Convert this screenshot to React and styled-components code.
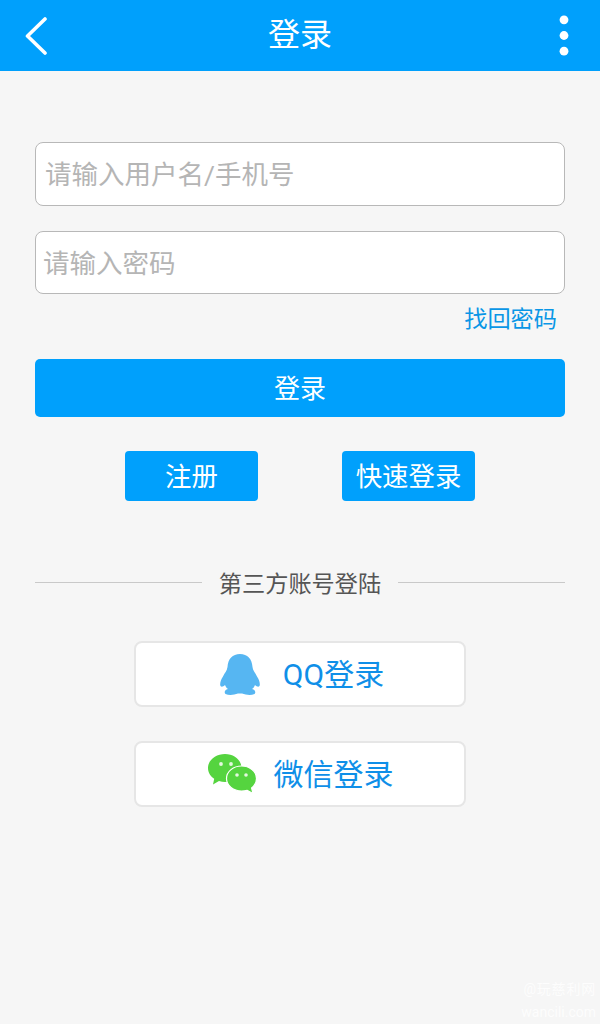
import styled, { createGlobalStyle } from 'styled-components'

const GlobalStyle = createGlobalStyle`
  html, body {
    margin: 0;
    padding: 0;
    background: #f6f6f6;
    font-family: Roboto, "Noto Sans CJK SC", "Liberation Sans", sans-serif;
  }
  * { box-sizing: border-box; }
`

const Page = styled.div`
  position: relative;
  width: 600px;
  height: 1024px;
  overflow: hidden;
  background: #f6f6f6;
`

const Header = styled.header`
  height: 71px;
  padding: 0 31px 0 24px;
  display: flex;
  align-items: center;
  justify-content: space-between;
  background: #00a0fc;
  color: #fff;
`

const HeaderTitle = styled.h1`
  margin: 0;
  font-size: 32px;
  font-weight: 400;
  line-height: 71px;
`

const IconButton = styled.div`
  width: ${props => (props.$end ? 21 : 28)}px;
  height: 44px;
  display: flex;
  align-items: center;
  justify-content: ${props => (props.$end ? 'flex-end' : 'flex-start')};
`

const Form = styled.main`
  padding: 71px 35px 0;
  display: flex;
  flex-direction: column;
`

const Field = styled.div`
  height: ${props => props.$height}px;
  margin-bottom: ${props => props.$gap}px;
  padding: 0 0 3px ${props => props.$indent}px;
  display: flex;
  align-items: center;
  background: #fff;
  border: 1px solid #b8b8b8;
  border-radius: 8px;
  color: #b5b5b5;
  font-size: 26.5px;
`

const ForgotLink = styled.a`
  align-self: flex-end;
  height: 34px;
  margin: 9px 8px 22px 0;
  color: #0a96e6;
  font-size: 23.2px;
  line-height: 32px;
`

const PrimaryButton = styled.button`
  height: 58px;
  padding: 0 0 3px;
  border: none;
  border-radius: 5px;
  background: #00a0fc;
  color: #fff;
  font-family: inherit;
  font-size: 26px;
`

const ButtonRow = styled.div`
  margin-top: 34px;
  display: flex;
  justify-content: center;
  gap: 84px;
`

const SmallButton = styled.button`
  width: 133px;
  height: 50px;
  padding: 0 0 4px;
  border: none;
  border-radius: 4px;
  background: #00a0fc;
  color: #fff;
  font-family: inherit;
  font-size: 26.4px;
`

const Divider = styled.div`
  margin-top: 63px;
  height: 36px;
  display: flex;
  align-items: center;
  gap: 17px;
  color: #555;
  font-size: 23.2px;
  white-space: nowrap;
  &::before, &::after {
    content: '';
    flex: 1;
    height: 1px;
    background: #c9c9c9;
  }
`

const DividerLabel = styled.span`
  padding-bottom: 1px;
`

const SocialList = styled.div`
  margin-top: 41px;
  display: flex;
  flex-direction: column;
  align-items: center;
  gap: 34px;
`

const SocialButton = styled.div`
  width: 332px;
  height: 66px;
  padding-left: ${props => props.$indent}px;
  display: flex;
  align-items: center;
  justify-content: center;
  gap: ${props => props.$gap}px;
  background: #fff;
  border: 2px solid #e6e6e6;
  border-radius: 8px;
  color: #0f8fe8;
  font-size: 30px;
`

const SocialLabel = styled.span`
  padding-bottom: 5px;
`

const Watermark = styled.div`
  position: absolute;
  right: 4px;
  bottom: 0;
  color: #fff;
  font-size: 14px;
  line-height: 23px;
  text-align: right;
  opacity: 0.85;
`

const WatermarkBrand = styled.span`
  letter-spacing: 0.8px;
`

const BackIcon = () => (
  <svg width="24" height="38" viewBox="0 0 24 38" fill="none">
    <path d="M21 2 L3.5 19 L21 36" stroke="#fff" strokeWidth="3.6" strokeLinecap="round" strokeLinejoin="round" />
  </svg>
)

const MoreIcon = () => (
  <svg width="10" height="41" viewBox="0 0 10 41" fill="#fff">
    <circle cx="5" cy="4.8" r="4.4" />
    <circle cx="5" cy="20.5" r="4.4" />
    <circle cx="5" cy="36.2" r="4.4" />
  </svg>
)

const QQIcon = () => (
  <svg width="40" height="41" viewBox="0 0 40 41" fill="#56b6f2">
    <path d="M20 0 C27.5 0 32 5 32.5 13 C33 17 35.5 19 37 22.5 C39 25.5 40 28.5 39.8 31 C39.5 33.5 37 33 35 31 C34.5 32.5 33.5 34 32 35 C35.5 36 36 38.5 34.5 40 C31 41.5 26 41 22 39.5 L18 39.5 C14 41 9 41.5 5.5 40 C4 38.5 4.5 36 8 35 C6.5 34 5.5 32.5 5 31 C3 33 0.5 33.5 0.2 31 C0 28.5 1 25.5 3 22.5 C4.5 19 7 17 7.5 13 C8 5 12.5 0 20 0 Z" />
  </svg>
)

const WechatIcon = () => (
  <svg width="49" height="40" viewBox="0 0 49 40">
    <path d="M17 0 C26 0 33.5 6 33.5 14 C33.5 22 26 28 17 28 C15 28 13 27.7 11 27 L5 30.5 L6.2 24.8 C2.5 22.3 0 18.5 0 14 C0 6 8 0 17 0 Z" fill="#55d43f" />
    <path d="M33.5 12 C41.5 12 48.5 17.5 48.5 24.5 C48.5 28.5 46.5 31.7 43.6 34 L45 39.5 L39.2 36.3 C37.5 36.8 35.5 37 33.5 37 C25.5 37 18.5 31.5 18.5 24.5 C18.5 17.5 25.5 12 33.5 12 Z" fill="#55d43f" stroke="#fff" strokeWidth="1.2" />
    <circle cx="13" cy="10" r="1.9" fill="#e4f8df" />
    <circle cx="23" cy="10" r="1.9" fill="#e4f8df" />
    <circle cx="29" cy="21" r="1.8" fill="#e4f8df" />
    <circle cx="38" cy="21" r="1.8" fill="#e4f8df" />
  </svg>
)

function App() {
  return (
    <Page>
      <GlobalStyle />
      <Header>
        <IconButton><BackIcon /></IconButton>
        <HeaderTitle>登录</HeaderTitle>
        <IconButton $end><MoreIcon /></IconButton>
      </Header>
      <Form>
        <Field $height={64} $gap={25} $indent={9}>请输入用户名/手机号</Field>
        <Field $height={63} $gap={0} $indent={7}>请输入密码</Field>
        <ForgotLink>找回密码</ForgotLink>
        <PrimaryButton>登录</PrimaryButton>
        <ButtonRow>
          <SmallButton>注册</SmallButton>
          <SmallButton>快速登录</SmallButton>
        </ButtonRow>
        <Divider><DividerLabel>第三方账号登陆</DividerLabel></Divider>
        <SocialList>
          <SocialButton $gap={23} $indent={4}><QQIcon /><SocialLabel>QQ登录</SocialLabel></SocialButton>
          <SocialButton $gap={17} $indent={1}><WechatIcon /><SocialLabel>微信登录</SocialLabel></SocialButton>
        </SocialList>
      </Form>
      <Watermark><WatermarkBrand>@玩慈利网</WatermarkBrand><br />wancili.com</Watermark>
    </Page>
  )
}

export default App
